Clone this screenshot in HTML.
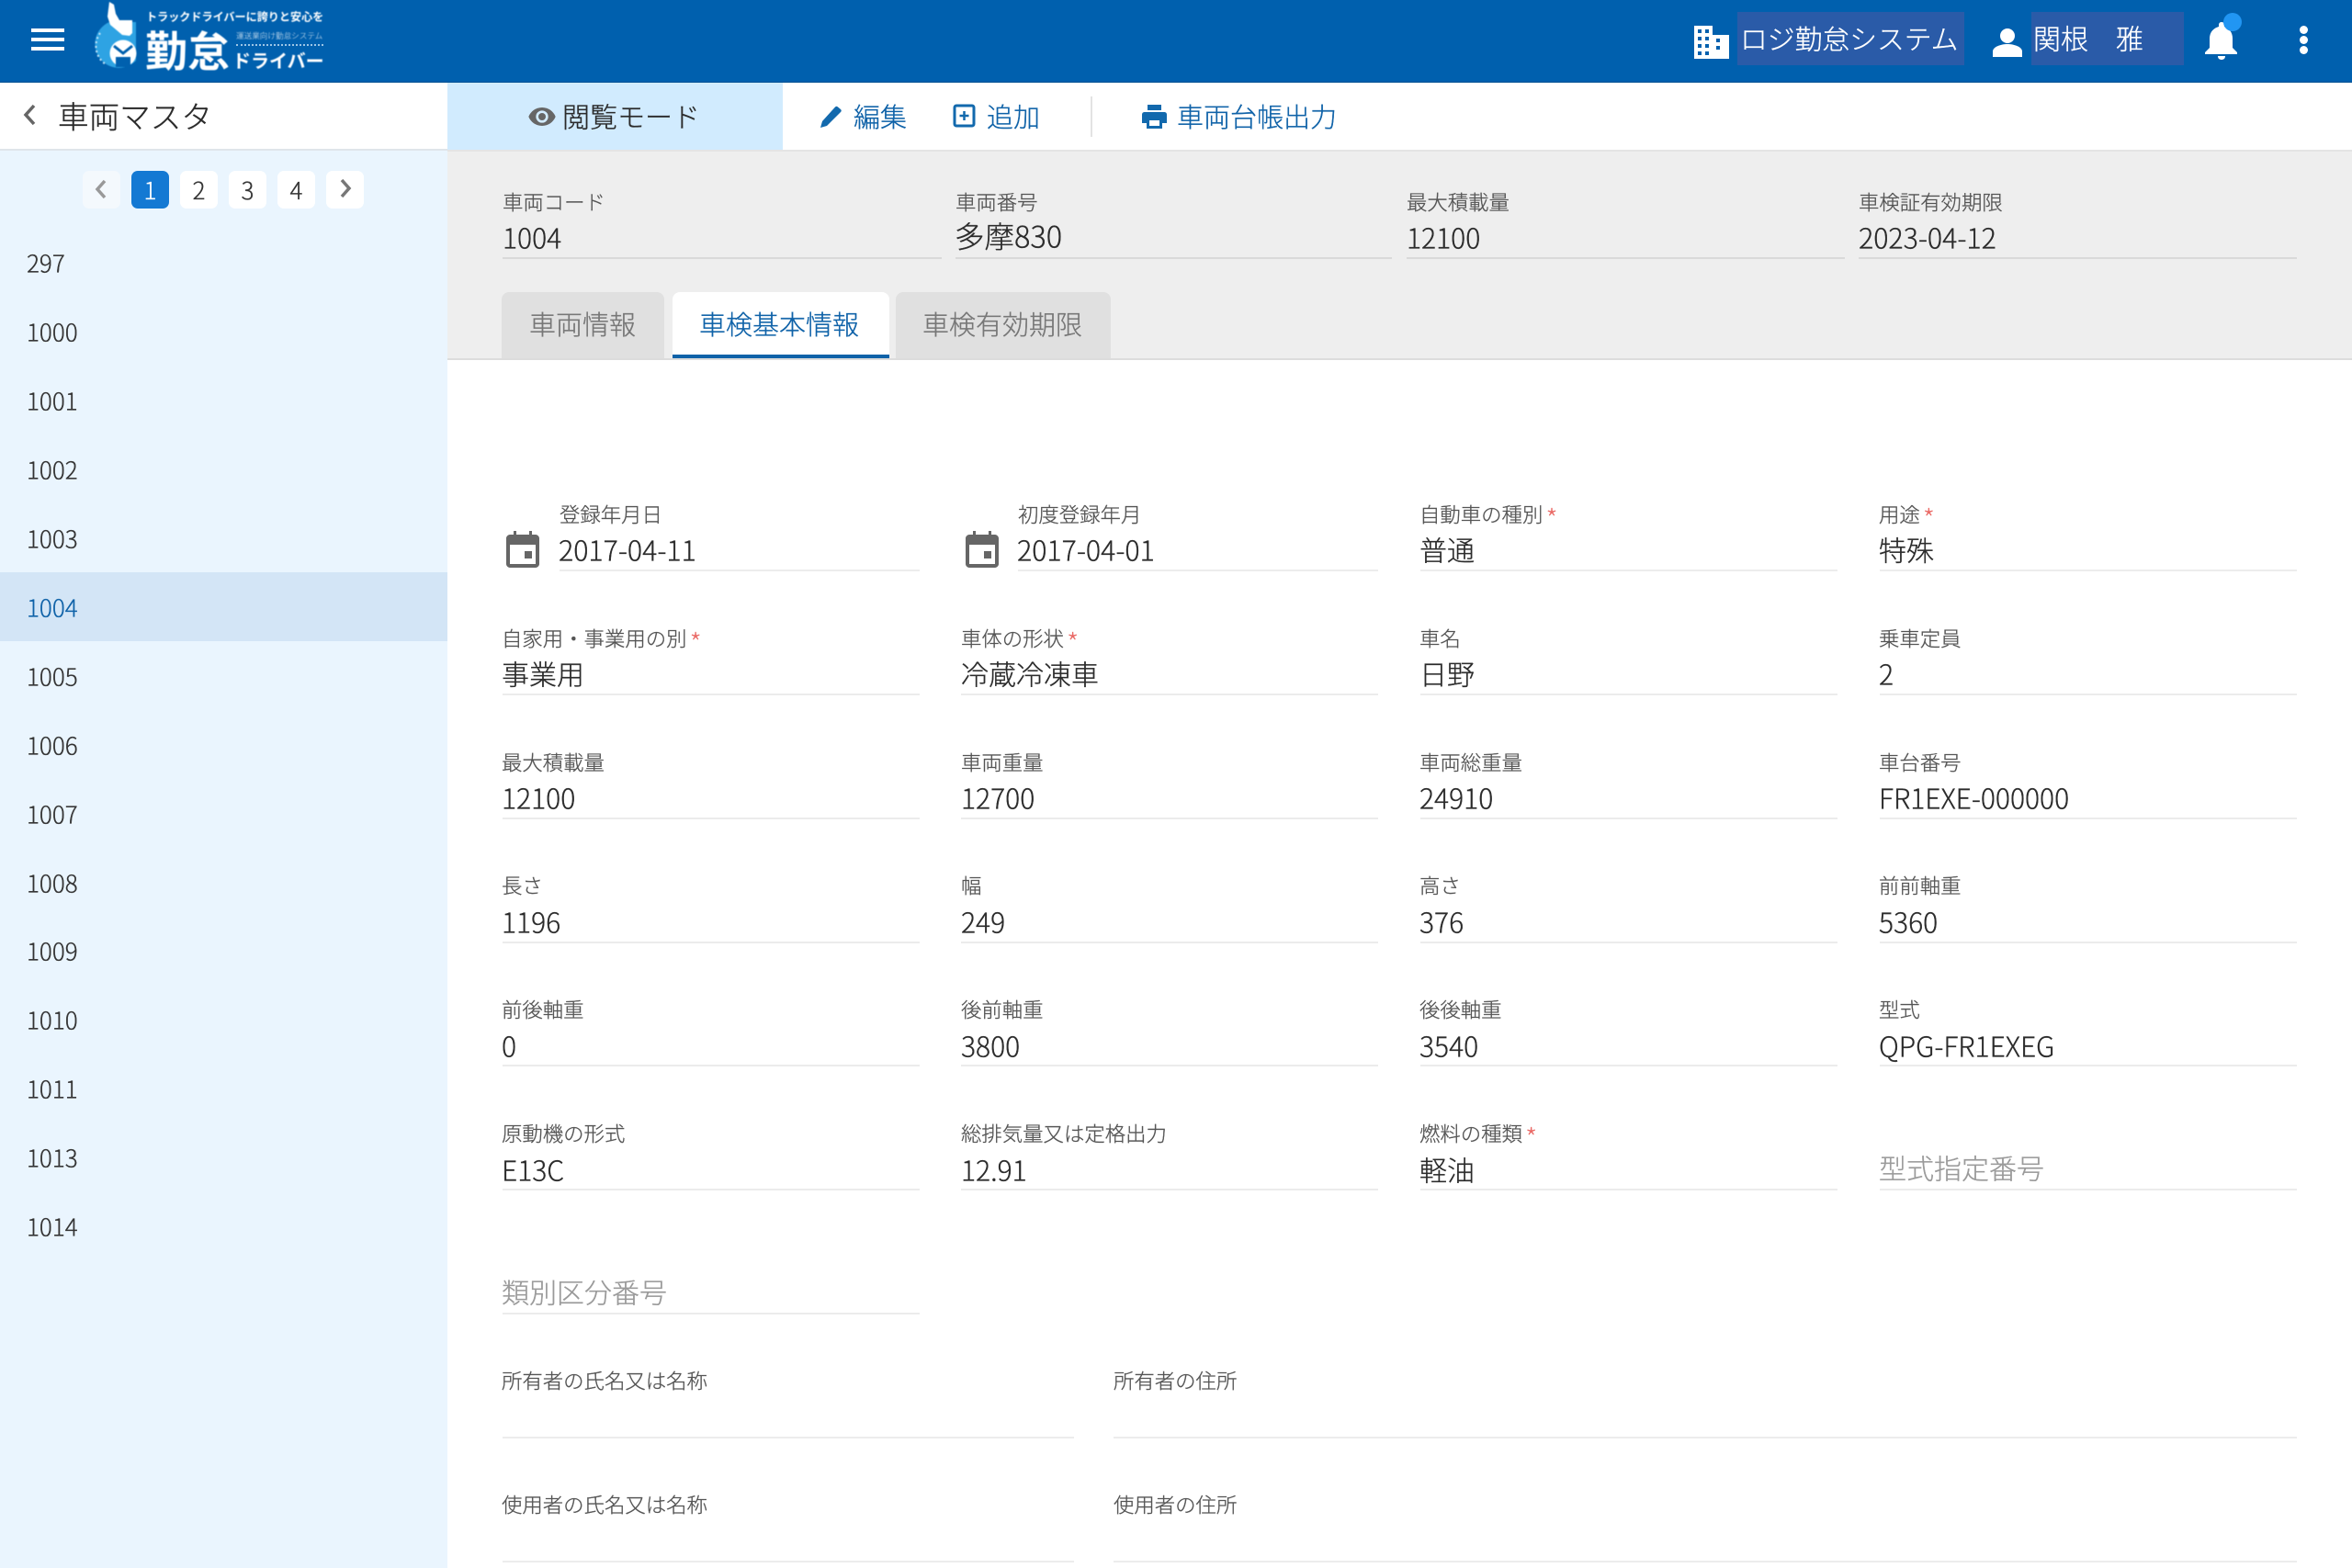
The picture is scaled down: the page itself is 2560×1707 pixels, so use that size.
<!DOCTYPE html>
<html lang="ja"><head><meta charset="utf-8"><title>車両マスタ</title>
<style>
*{box-sizing:border-box}
html,body{margin:0;padding:0}
body{position:relative;width:2560px;height:1707px;overflow:hidden;background:#fff;font-family:"Noto Sans CJK JP","Liberation Sans",sans-serif;color:#222;font-weight:300;-webkit-text-stroke:.3px}
.a{position:absolute}
.t{position:absolute;white-space:nowrap;line-height:1;transform:translateY(calc(-50% - 1.5px))}
.l{font-size:22.4px;color:#555}
.t.v{font-size:30px;color:#2b2b2b;transform:translateY(calc(-50% - 2.5px))}
.p{font-size:30px;color:#9a9a9a}
.r{color:#ea6a66;font-size:30px;line-height:0;vertical-align:-8px;margin-left:3px;font-weight:300;-webkit-text-stroke:0}
.u{position:absolute;height:2px;background:#ececec}
.t.s{font-size:26px;left:29px;color:#333;transform:translateY(calc(-50% - .5px))}
.pg{position:absolute;top:186px;width:41px;height:41px;border-radius:7px;background:#fff;text-align:center;font-size:26px;line-height:41px;color:#333}
.lg{-webkit-text-stroke:0;filter:blur(.5px)}
</style></head><body>
<!-- header -->
<div class="a" style="left:0;top:0;width:2560px;height:90px;background:#0060ae;border-bottom:1px solid #004f91"></div>
<div class="a" style="left:34px;top:31px;width:36px;height:4px;background:#fff"></div>
<div class="a" style="left:34px;top:41px;width:36px;height:4px;background:#fff"></div>
<div class="a" style="left:34px;top:51px;width:36px;height:4px;background:#fff"></div>
<!-- logo -->
<svg class="a" style="left:95px;top:0;filter:blur(.5px)" width="60" height="80" viewBox="0 0 60 80">
<path d="M24 24A26 26 0 1 0 53 66L53 24z" fill="#2ea3e3"/>
<path d="M14 36A24 24 0 0 0 20 70" stroke="#cfe9f8" stroke-width="2" stroke-dasharray="2 3" fill="none"/>
<path d="M24 2l5 3 2 10 4 7h14v14l-3 3-8-1-13-11-3-9z" fill="#fff"/>
<circle cx="39" cy="58" r="14.500" fill="#fff"/>
<path d="M29 50l10 8 10-8" stroke="#0060ae" stroke-width="3" fill="none"/>
<rect x="31" y="62" width="16" height="11" fill="#0060ae"/>
</svg>
<span class="t lg" style="left:159px;top:20px;font-size:12.100px;color:#fff;font-weight:700">トラックドライバーに誇りと安心を</span>
<span class="t lg" style="left:158px;top:55px;font-size:46px;color:#fff;font-weight:700">勤怠</span>
<span class="t lg" style="left:257px;top:41px;font-size:8.600px;color:#d8e8f5">運送業向け勤怠システム</span>
<div class="a" style="left:257px;top:48px;width:95px;border-top:2px dotted #9cc6e6"></div>
<span class="t lg" style="left:253px;top:67px;font-size:20px;color:#fff;font-weight:700">ドライバー</span>

<svg class="a" style="left:1843px;top:26px" width="40" height="38" viewBox="0 0 40 38"><path fill="#fff" fill-rule="evenodd" d="M1 2h20v10h18v26H1zM5 6v4h4V6zm8 0v4h4V6zM5 14v4h4v-4zm8 0v4h4v-4zM5 22v4h4v-4zm8 0v4h4v-4zM5 30v4h4v-4zm8 0v4h4v-4zm12-14v4h4v-4zm0 8v4h4v-4z"/></svg>
<div class="a" style="left:1891px;top:13px;width:247px;height:58px;background:#2a5ba8"></div>
<span class="t" style="left:1894px;top:43px;font-size:29.800px;color:#fff">ロジ勤怠システム</span>
<svg class="a" style="left:2168px;top:30px" width="34" height="32" viewBox="0 0 34 32"><circle cx="17" cy="9" r="8" fill="#fff"/><path d="M1 32v-6c0-5 9-8 16-8s16 3 16 8v6z" fill="#fff"/></svg>
<div class="a" style="left:2211px;top:13px;width:166px;height:58px;background:#2a5ba8"></div>
<span class="t" style="left:2213px;top:42px;font-size:30px;color:#fff">関根　雅</span>
<svg class="a" style="left:2399px;top:22px" width="38" height="44" viewBox="0 0 38 44"><path fill="#fff" d="M19 2c2 0 3 1.500 3 3v2c6 2 9 7 9 13v10l5 5v2H1v-2l5-5V20c0-6 3-11 10-13V5c0-1.500 1-3 3-3z"/><path fill="#fff" d="M15 39h8c0 3-2 4-4 4s-4-1-4-4z"/></svg>
<div class="a" style="left:2420px;top:14px;width:20px;height:20px;border-radius:50%;background:#2196f3"></div>
<div class="a" style="left:2503px;top:28px;width:9px;height:9px;border-radius:50%;background:#fff"></div>
<div class="a" style="left:2503px;top:39px;width:9px;height:9px;border-radius:50%;background:#fff"></div>
<div class="a" style="left:2503px;top:50px;width:9px;height:9px;border-radius:50%;background:#fff"></div>

<!-- sidebar -->
<div class="a" style="left:0;top:90px;width:487px;height:74px;background:#fff;border-bottom:2px solid #dfe5ea"></div>
<svg class="a" style="left:23px;top:112px" width="20" height="26" viewBox="0 0 20 26"><path d="M14 3L5 13l9 10" stroke="#666" stroke-width="3.500" fill="none"/></svg>
<span class="t" style="left:63px;top:127px;font-size:33.600px;color:#2b2b2b">車両マスタ</span>
<div class="a" style="left:0;top:164px;width:487px;height:1543px;background:#eaf5fe"></div>
<div class="pg" style="left:90px;background:#f4f9fd"><svg width="41" height="41" viewBox="0 0 41 41" style="display:block"><path d="M24 11l-8 9 8 9" stroke="#999" stroke-width="3.500" fill="none"/></svg></div>
<div class="pg" style="left:143px;background:#1479d3;color:#fff">1</div>
<div class="pg" style="left:196px">2</div>
<div class="pg" style="left:249px">3</div>
<div class="pg" style="left:302px">4</div>
<div class="pg" style="left:355px"><svg width="41" height="41" viewBox="0 0 41 41" style="display:block"><path d="M17 10l8 9-8 9" stroke="#777" stroke-width="3.500" fill="none"/></svg></div>
<div class="a" style="left:0;top:623px;width:487px;height:75px;background:#d3e5f6"></div>
<span class="t s" style="top:287px">297</span>
<span class="t s" style="top:362px">1000</span>
<span class="t s" style="top:437px">1001</span>
<span class="t s" style="top:512px">1002</span>
<span class="t s" style="top:587px">1003</span>
<span class="t s" style="top:662px;color:#0f62a8">1004</span>
<span class="t s" style="top:737px">1005</span>
<span class="t s" style="top:812px">1006</span>
<span class="t s" style="top:887px">1007</span>
<span class="t s" style="top:962px">1008</span>
<span class="t s" style="top:1036px">1009</span>
<span class="t s" style="top:1111px">1010</span>
<span class="t s" style="top:1186px">1011</span>
<span class="t s" style="top:1261px">1013</span>
<span class="t s" style="top:1336px">1014</span>

<!-- toolbar -->
<div class="a" style="left:487px;top:90px;width:365px;height:73px;background:#d1ebfe"></div>
<svg class="a" style="left:574px;top:111px" width="32" height="32" viewBox="0 0 24 24"><path fill="#666" d="M12 4.500C7 4.500 2.700 7.600 1 12c1.700 4.400 6 7.500 11 7.500s9.300-3.100 11-7.500c-1.700-4.400-6-7.500-11-7.500z"/><circle cx="12" cy="12" r="5" fill="#d1ebfe"/><circle cx="12" cy="12" r="3" fill="#666"/></svg>
<span class="t" style="left:612px;top:127px;font-size:30px;color:#2b2b2b">閲覧モード</span>
<svg class="a" style="left:892px;top:114px" width="26" height="26" viewBox="0 0 26 26"><path fill="#1269ad" d="M1 25l2-7L17 2.500c1-1 2-1 3 0l3 2.500c1 1 1 2 0 3L8 23z"/></svg>
<span class="t" style="left:929px;top:128px;font-size:29px;color:#0f62a8">編集</span>
<svg class="a" style="left:1037px;top:113px" width="26" height="27" viewBox="0 0 26 27"><rect x="2" y="2" width="21" height="22" rx="2" fill="none" stroke="#1269ad" stroke-width="3"/><path d="M12.500 8v10M7.500 13h10" stroke="#1269ad" stroke-width="2.500"/></svg>
<span class="t" style="left:1074px;top:128px;font-size:29px;color:#0f62a8">追加</span>
<div class="a" style="left:1187px;top:105px;width:2px;height:44px;background:#e3e3e3"></div>
<svg class="a" style="left:1243px;top:113px" width="27" height="28" viewBox="0 0 27 28"><path fill="#1269ad" d="M6 1h15v6H6zM3 9h21c2 0 3 1 3 3v9h-5v6H5v-6H0v-9c0-2 1-3 3-3zm5 9v6h11v-6z"/></svg>
<span class="t" style="left:1281px;top:128px;font-size:29px;color:#0f62a8">車両台帳出力</span>

<!-- summary -->
<div class="a" style="left:487px;top:163px;width:2073px;height:227px;background:#eeeeee;border-top:2px solid #e4e4e4"></div>
<span class="t l" style="left:547px;top:221px">車両コード</span>
<span class="t v" style="left:547px;top:260px">1004</span>
<div class="u" style="left:547px;top:280px;width:478px;background:#d9d9d9"></div>
<span class="t l" style="left:1040px;top:221px">車両番号</span>
<span class="t v" style="left:1039px;top:259px;font-size:32.500px">多摩830</span>
<div class="u" style="left:1040px;top:280px;width:475px;background:#d9d9d9"></div>
<span class="t l" style="left:1531px;top:221px">最大積載量</span>
<span class="t v" style="left:1531px;top:260px">12100</span>
<div class="u" style="left:1531px;top:280px;width:477px;background:#d9d9d9"></div>
<span class="t l" style="left:2023px;top:221px">車検証有効期限</span>
<span class="t v" style="left:2023px;top:260px;font-size:30.300px">2023-04-12</span>
<div class="u" style="left:2023px;top:280px;width:477px;background:#d9d9d9"></div>

<!-- tabs -->
<div class="a" style="left:487px;top:390px;width:2073px;height:2px;background:#dcdcdc"></div>
<div class="a" style="left:546px;top:318px;width:177px;height:72px;background:#e0e0e0;border-radius:8px 8px 0 0"></div>
<span class="t" style="left:576px;top:354px;font-size:29px;color:#777">車両情報</span>
<div class="a" style="left:732px;top:318px;width:236px;height:72px;background:#fff;border-radius:8px 8px 0 0;border-bottom:4px solid #0f62a8"></div>
<span class="t" style="left:761px;top:354px;font-size:29px;color:#0f62a8">車検基本情報</span>
<div class="a" style="left:975px;top:318px;width:234px;height:72px;background:#e0e0e0;border-radius:8px 8px 0 0"></div>
<span class="t" style="left:1004px;top:354px;font-size:29px;color:#777">車検有効期限</span>

<!-- row 1 -->
<svg class="a" style="left:550px;top:576px" width="38" height="44" viewBox="0 0 38 44"><path fill="#666" fill-rule="evenodd" d="M9 2h3v4h14V2h3v4h4c2 0 4 2 4 4v28c0 2-2 4-4 4H5c-2 0-4-2-4-4V10c0-2 2-4 4-4h4zM5 17v21h28V17z"/><rect x="21" y="24" width="8" height="8" fill="#666"/></svg>
<span class="t l" style="left:609px;top:561px">登録年月日</span>
<span class="t v" style="left:608px;top:600px;font-size:30.300px">2017-04-11</span>
<div class="u" style="left:609px;top:620px;width:392px"></div>
<svg class="a" style="left:1050px;top:576px" width="38" height="44" viewBox="0 0 38 44"><path fill="#666" fill-rule="evenodd" d="M9 2h3v4h14V2h3v4h4c2 0 4 2 4 4v28c0 2-2 4-4 4H5c-2 0-4-2-4-4V10c0-2 2-4 4-4h4zM5 17v21h28V17z"/><rect x="21" y="24" width="8" height="8" fill="#666"/></svg>
<span class="t l" style="left:1108px;top:561px">初度登録年月</span>
<span class="t v" style="left:1107px;top:600px;font-size:30.300px">2017-04-01</span>
<div class="u" style="left:1108px;top:620px;width:392px"></div>
<span class="t l" style="left:1545px;top:561px">自動車の種別<span class="r">*</span></span>
<span class="t v" style="left:1545px;top:600px">普通</span>
<div class="u" style="left:1546px;top:620px;width:454px"></div>
<span class="t l" style="left:2045px;top:561px">用途<span class="r">*</span></span>
<span class="t v" style="left:2045px;top:600px">特殊</span>
<div class="u" style="left:2046px;top:620px;width:454px"></div>
<!-- row 2 -->
<span class="t l" style="left:546px;top:696px">自家用・事業用の別<span class="r">*</span></span>
<span class="t v" style="left:546px;top:735px">事業用</span>
<div class="u" style="left:547px;top:755px;width:454px"></div>
<span class="t l" style="left:1046px;top:696px">車体の形状<span class="r">*</span></span>
<span class="t v" style="left:1046px;top:735px">冷蔵冷凍車</span>
<div class="u" style="left:1046px;top:755px;width:454px"></div>
<span class="t l" style="left:1545px;top:696px">車名</span>
<span class="t v" style="left:1545px;top:735px">日野</span>
<div class="u" style="left:1546px;top:755px;width:454px"></div>
<span class="t l" style="left:2045px;top:696px">乗車定員</span>
<span class="t v" style="left:2045px;top:735px">2</span>
<div class="u" style="left:2046px;top:755px;width:454px"></div>
<!-- row 3 -->
<span class="t l" style="left:546px;top:831px">最大積載量</span>
<span class="t v" style="left:546px;top:870px">12100</span>
<div class="u" style="left:547px;top:890px;width:454px"></div>
<span class="t l" style="left:1046px;top:831px">車両重量</span>
<span class="t v" style="left:1046px;top:870px">12700</span>
<div class="u" style="left:1046px;top:890px;width:454px"></div>
<span class="t l" style="left:1545px;top:831px">車両総重量</span>
<span class="t v" style="left:1545px;top:870px">24910</span>
<div class="u" style="left:1546px;top:890px;width:454px"></div>
<span class="t l" style="left:2045px;top:831px">車台番号</span>
<span class="t v" style="left:2045px;top:870px">FR1EXE-000000</span>
<div class="u" style="left:2046px;top:890px;width:454px"></div>
<!-- row 4 -->
<span class="t l" style="left:546px;top:965px">長さ</span>
<span class="t v" style="left:546px;top:1005px">1196</span>
<div class="u" style="left:547px;top:1025px;width:454px"></div>
<span class="t l" style="left:1046px;top:965px">幅</span>
<span class="t v" style="left:1046px;top:1005px">249</span>
<div class="u" style="left:1046px;top:1025px;width:454px"></div>
<span class="t l" style="left:1545px;top:965px">高さ</span>
<span class="t v" style="left:1545px;top:1005px">376</span>
<div class="u" style="left:1546px;top:1025px;width:454px"></div>
<span class="t l" style="left:2045px;top:965px">前前軸重</span>
<span class="t v" style="left:2045px;top:1005px">5360</span>
<div class="u" style="left:2046px;top:1025px;width:454px"></div>
<!-- row 5 -->
<span class="t l" style="left:546px;top:1100px">前後軸重</span>
<span class="t v" style="left:546px;top:1140px">0</span>
<div class="u" style="left:547px;top:1159px;width:454px"></div>
<span class="t l" style="left:1046px;top:1100px">後前軸重</span>
<span class="t v" style="left:1046px;top:1140px">3800</span>
<div class="u" style="left:1046px;top:1159px;width:454px"></div>
<span class="t l" style="left:1545px;top:1100px">後後軸重</span>
<span class="t v" style="left:1545px;top:1140px">3540</span>
<div class="u" style="left:1546px;top:1159px;width:454px"></div>
<span class="t l" style="left:2045px;top:1100px">型式</span>
<span class="t v" style="left:2045px;top:1140px">QPG-FR1EXEG</span>
<div class="u" style="left:2046px;top:1159px;width:454px"></div>
<!-- row 6 -->
<span class="t l" style="left:546px;top:1235px">原動機の形式</span>
<span class="t v" style="left:546px;top:1275px">E13C</span>
<div class="u" style="left:547px;top:1294px;width:454px"></div>
<span class="t l" style="left:1046px;top:1235px">総排気量又は定格出力</span>
<span class="t v" style="left:1046px;top:1275px">12.91</span>
<div class="u" style="left:1046px;top:1294px;width:454px"></div>
<span class="t l" style="left:1545px;top:1235px">燃料の種類<span class="r">*</span></span>
<span class="t v" style="left:1545px;top:1275px">軽油</span>
<div class="u" style="left:1546px;top:1294px;width:454px"></div>
<span class="t p" style="left:2045px;top:1272px">型式指定番号</span>
<div class="u" style="left:2046px;top:1294px;width:454px"></div>
<!-- row 7 -->
<span class="t p" style="left:546px;top:1407px">類別区分番号</span>
<div class="u" style="left:547px;top:1429px;width:454px"></div>
<!-- wide -->
<span class="t l" style="left:546px;top:1504px">所有者の氏名又は名称</span>
<div class="u" style="left:547px;top:1564px;width:622px"></div>
<span class="t l" style="left:1212px;top:1504px">所有者の住所</span>
<div class="u" style="left:1212px;top:1564px;width:1288px"></div>
<span class="t l" style="left:546px;top:1639px">使用者の氏名又は名称</span>
<div class="u" style="left:547px;top:1699px;width:622px"></div>
<span class="t l" style="left:1212px;top:1639px">使用者の住所</span>
<div class="u" style="left:1212px;top:1699px;width:1288px"></div>
</body></html>
